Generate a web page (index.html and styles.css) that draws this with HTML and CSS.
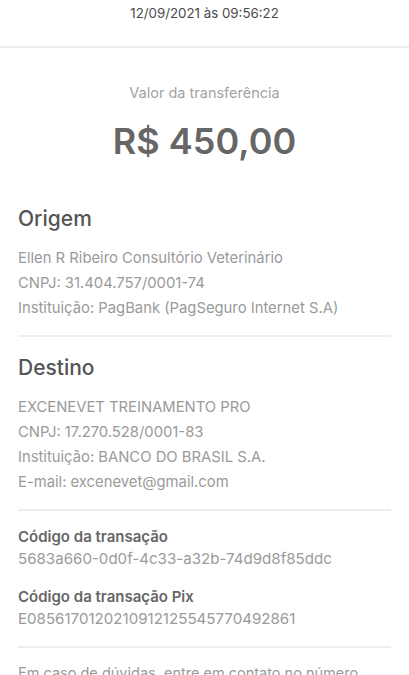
FILE: index.html
```html
<!DOCTYPE html>
<html lang="pt-BR">
<head>
<meta charset="utf-8">
<title>Comprovante</title>
<link rel="stylesheet" href="styles.css">
</head>
<body>
<header class="header">12/09/2021 às 09:56:22</header>
<section class="amount">
  <div class="amount-label">Valor da transferência</div>
  <div class="amount-value">R$ 450,00</div>
</section>
<main class="content">
  <section class="block">
    <h2 class="block-title">Origem</h2>
    <div class="lines">
      <div>Ellen R Ribeiro Consultório Veterinário</div>
      <div>CNPJ: 31.404.757/0001-74</div>
      <div>Instituição: PagBank (PagSeguro Internet S.A)</div>
    </div>
  </section>
  <section class="block">
    <h2 class="block-title">Destino</h2>
    <div class="lines">
      <div>EXCENEVET TREINAMENTO PRO</div>
      <div>CNPJ: 17.270.528/0001-83</div>
      <div>Instituição: BANCO DO BRASIL S.A.</div>
      <div>E-mail: excenevet@gmail.com</div>
    </div>
  </section>
  <section class="block codes">
    <div class="code">
      <div class="code-title">Código da transação</div>
      <div class="code-value">5683a660-0d0f-4c33-a32b-74d9d8f85ddc</div>
    </div>
    <div class="code">
      <div class="code-title">Código da transação Pix</div>
      <div class="code-value">E0856170120210912125545770492861</div>
    </div>
  </section>
  <p class="footer">Em caso de dúvidas, entre em contato no número</p>
</main>
</body>
</html>
```
FILE: styles.css
```css
html, body {
  margin: 0;
  padding: 0;
  background: #ffffff;
}
body {
  font-family: Inter, "Noto Sans", sans-serif;
  color: #9a9a9a;
  width: 409px;
  overflow: hidden;
}
.header {
  box-sizing: border-box;
  height: 48px;
  padding-top: 3px;
  font-size: 13.3px;
  line-height: 20px;
  text-align: center;
  color: #4a4a4a;
  border-bottom: 2px solid #ececec;
}
.amount {
  display: flex;
  flex-direction: column;
  align-items: center;
  padding-top: 35px;
}
.amount-label {
  font-size: 14.5px;
  line-height: 20px;
  color: #a3a3a3;
}
.amount-value {
  margin-top: 15px;
  font-size: 36px;
  line-height: 46px;
  font-weight: 600;
  color: #666666;
}
.content {
  padding: 24px 18px 0;
}
.block {
  padding: 17px 0 14px;
  border-bottom: 2px solid #eeeeee;
}
.block-title {
  margin: 0 0 13px;
  font-size: 21px;
  line-height: 28px;
  font-weight: 500;
  color: #555555;
}
.lines {
  font-size: 14.8px;
  line-height: 25px;
}
.codes {
  display: flex;
  flex-direction: column;
  gap: 16px;
  padding: 15px 0 16px;
}
.code-title {
  font-size: 15px;
  line-height: 22px;
  font-weight: 600;
  color: #666666;
}
.code-value {
  font-size: 15.1px;
  line-height: 22px;
}
.footer {
  margin: 0;
  padding-top: 12px;
  font-size: 14.5px;
  line-height: 25px;
}
```
